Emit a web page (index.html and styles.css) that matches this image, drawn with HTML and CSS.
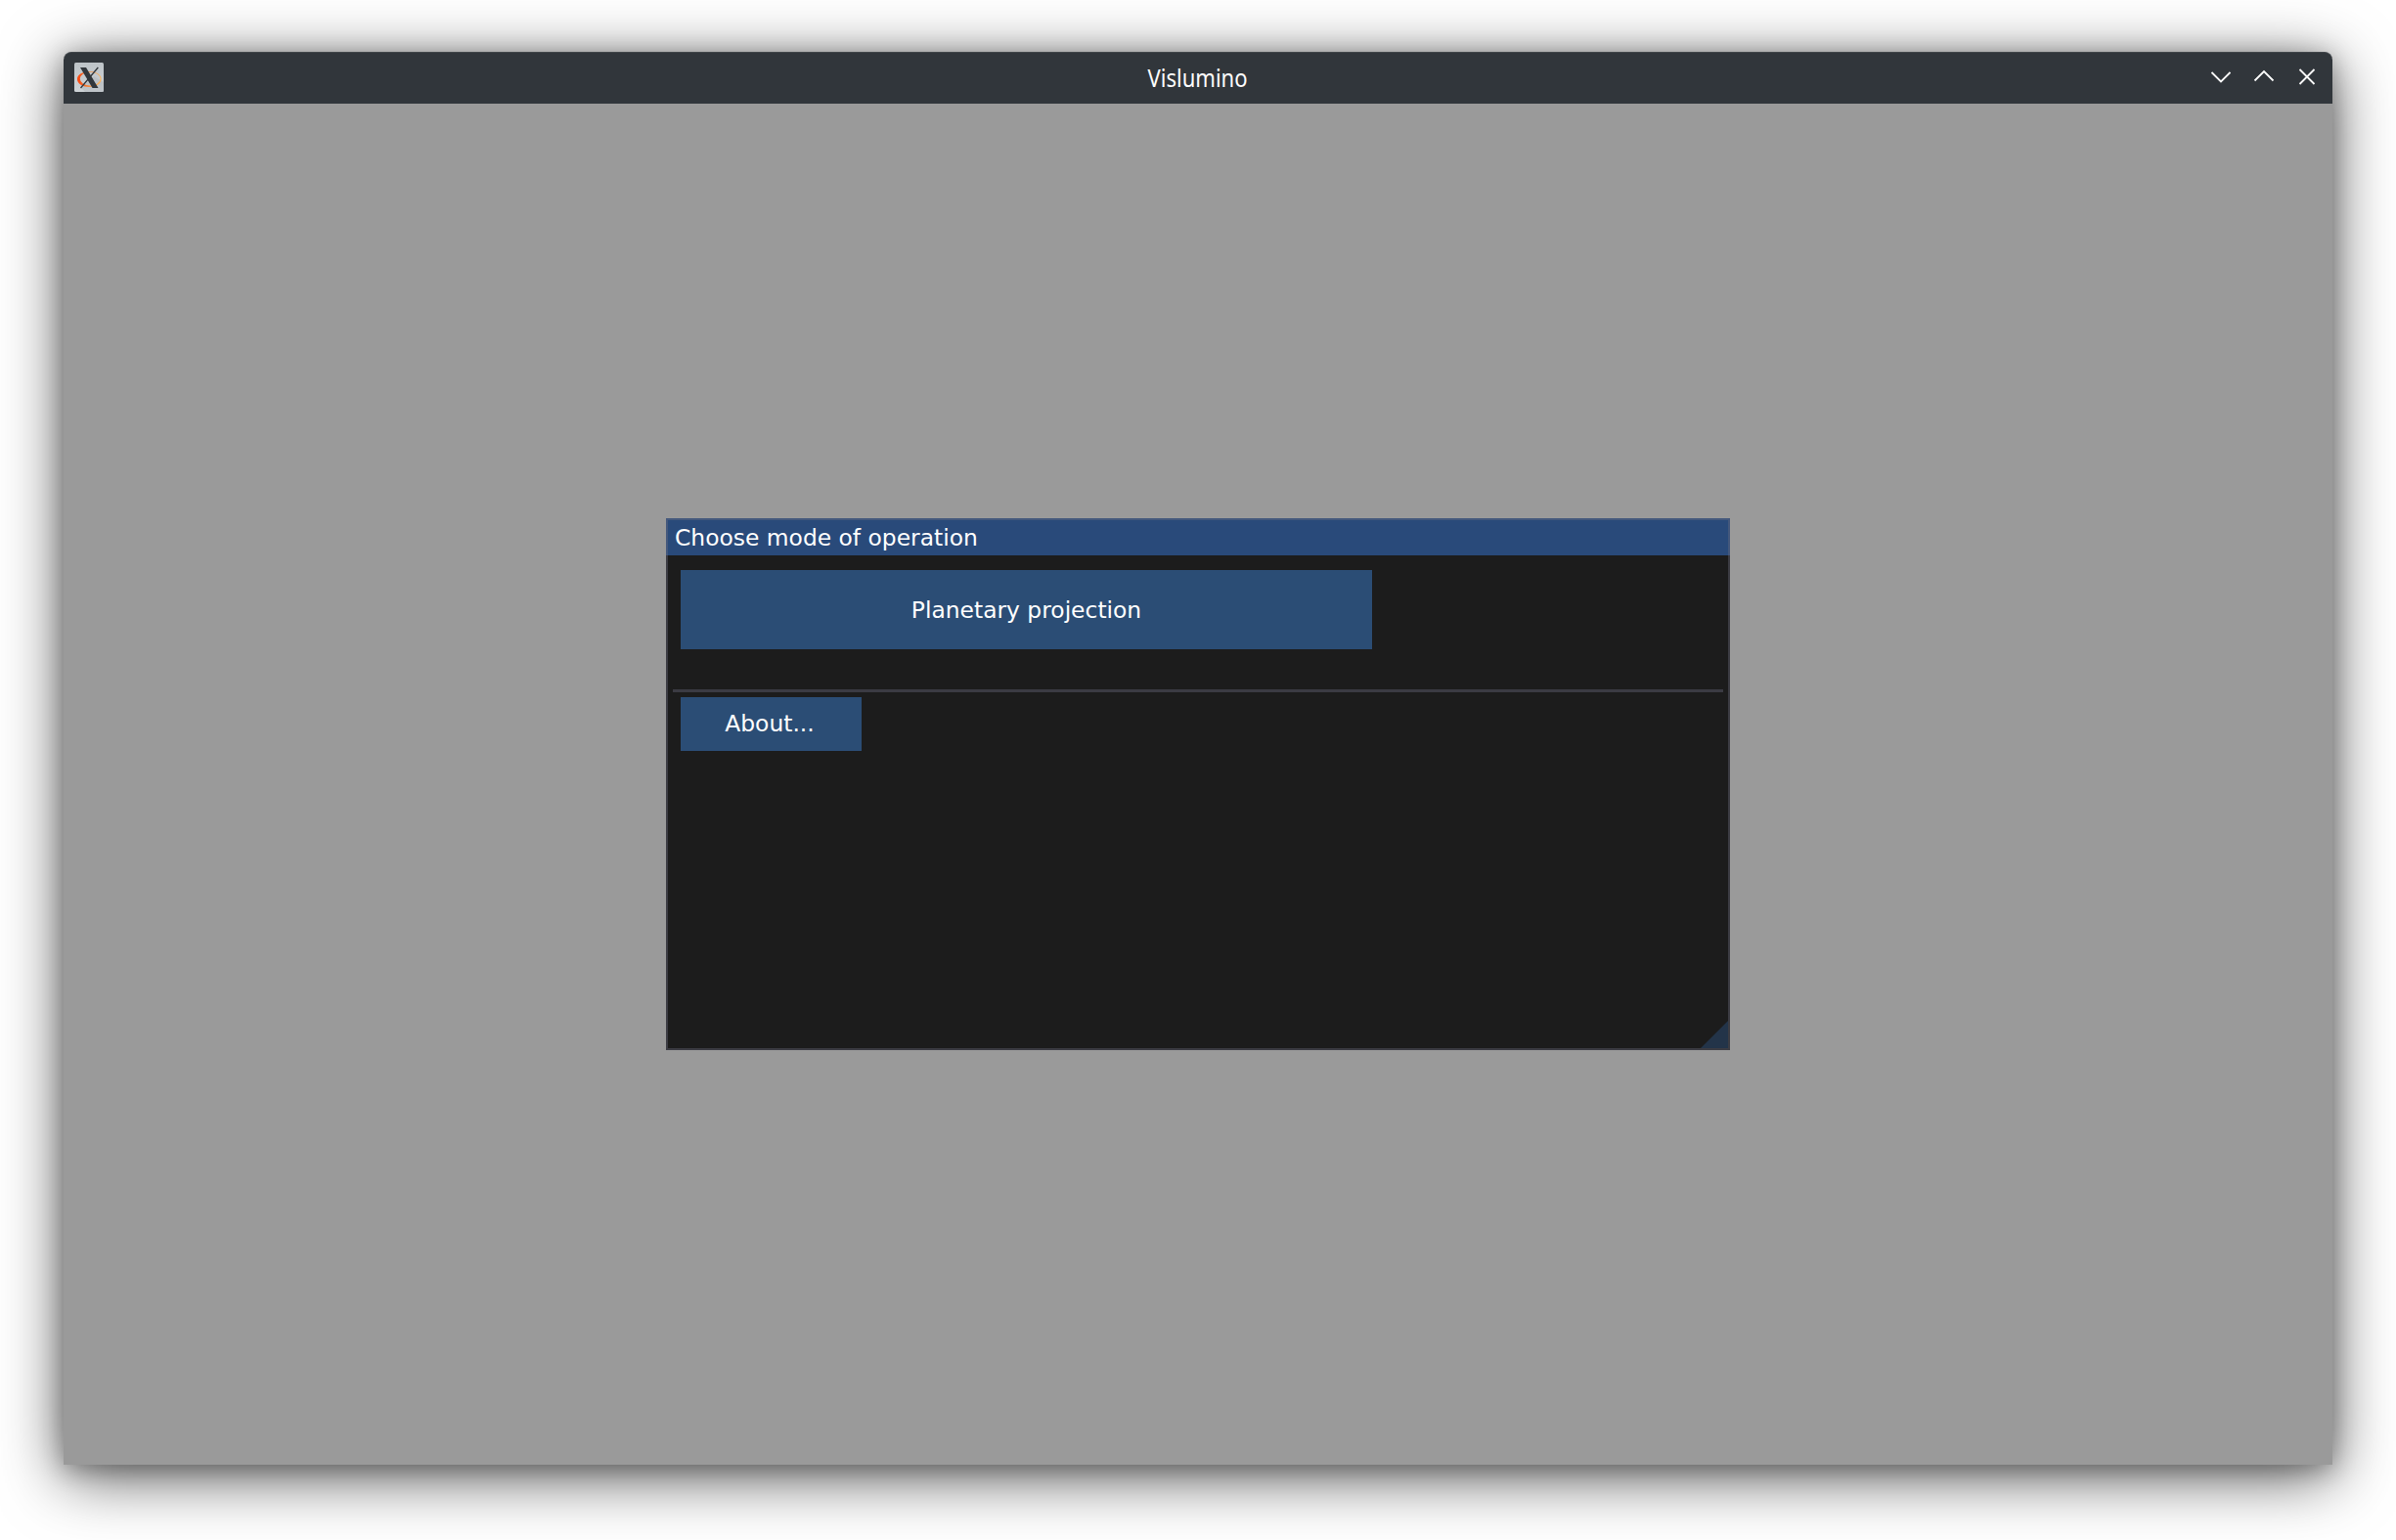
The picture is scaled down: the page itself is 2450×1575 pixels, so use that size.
FILE: index.html
```html
<!DOCTYPE html>
<html lang="en">
<head>
<meta charset="utf-8">
<title>Vislumino</title>
<link rel="stylesheet" href="styles.css">
</head>
<body>
<main class="window">
  <header class="titlebar">
    <svg class="app-icon" viewBox="0 0 30 30" aria-hidden="true">
      <defs>
        <linearGradient id="ring" x1="0" x2="1" y1="0" y2="0">
          <stop offset="0" stop-color="#f8430f"/><stop offset=".5" stop-color="#f58a3c"/><stop offset="1" stop-color="#fbb65c"/>
        </linearGradient>
        <linearGradient id="plate" x1="0" x2="0" y1="0" y2="1">
          <stop offset="0" stop-color="#bdc3c7"/><stop offset="1" stop-color="#ced3d6"/>
        </linearGradient>
      </defs>
      <rect width="30" height="30" rx="1.5" fill="url(#plate)"/>
      <path d="M7 26L11 30H30V20L20 14Z" fill="#a9afb3" opacity=".4"/>
      <path fill="url(#ring)" fill-rule="evenodd" d="M3 17A12.300 8 0 0 1 27.600 17A12.300 8 0 0 1 3 17ZM5.800 16.600A10.400 6.800 0 0 0 26.600 16.600A10.400 6.800 0 0 0 5.800 16.600Z"/>
      <path fill="#31363b" d="M6 5H12L24.500 26H18.500Z"/>
      <path d="M24.300 5L6.500 26" stroke="#31363b" stroke-width="1.300"/>
    </svg>
    <h1 class="window-title">Vislumino</h1>
    <div class="controls">
      <svg viewBox="0 0 24 24"><path d="M2.500 7L12 16.500L21.500 7"/></svg>
      <svg viewBox="0 0 24 24"><path d="M2.500 15.500L12 6L21.500 15.500"/></svg>
      <svg viewBox="0 0 24 24"><path d="M4.500 4L19.500 19M19.500 4L4.500 19"/></svg>
    </div>
  </header>
  <div class="canvas">
    <section class="dialog">
      <h2 class="dialog-title">Choose mode of operation</h2>
      <div class="dialog-body">
        <button class="button mode">Planetary projection</button>
        <hr class="separator">
        <button class="button about">About...</button>
      </div>
      <i class="grip"></i>
    </section>
  </div>
</main>
</body>
</html>
```
FILE: styles.css
```css
* { box-sizing: border-box; }
body {
  margin: 0;
  width: 2450px;
  height: 1575px;
  padding: 53px 65px 77px;
  background: #fff;
  overflow: hidden;
}
.window {
  display: flex;
  flex-direction: column;
  height: 1445px;
  border-radius: 8px 8px 0 0;
  box-shadow: 0 12px 64px rgba(0, 0, 0, .66), 0 4px 24px rgba(0, 0, 0, .28);
}
.titlebar {
  display: grid;
  grid-template-columns: 1fr auto 1fr;
  align-items: center;
  height: 53px;
  padding: 0 14px 2px 11px;
  background: #31363b;
  border-top: 1px solid #42474b;
  border-radius: 8px 8px 0 0;
}
.app-icon { width: 30px; height: 30px; }
.window-title {
  margin: 0;
  padding: 1px 0 0 3px;
  font: 400 24.5px/32px "Noto Sans", sans-serif;
  color: #fcfcfc;
  transform: scaleX(.9);
}
.controls { display: flex; justify-content: flex-end; gap: 20px; }
.controls svg { width: 24px; height: 24px; fill: none; stroke: #fcfcfc; stroke-width: 1.8; }
.canvas {
  flex: 1;
  display: flex;
  justify-content: center;
  align-items: center;
  background: #9a9a9a;
}
.dialog {
  position: relative;
  width: 1088px;
  height: 544px;
  background: #1c1c1c;
  font: 400 23.4px/27px "DejaVu Sans", sans-serif;
  color: #fff;
}
.dialog::after {
  content: "";
  position: absolute;
  inset: 0;
  border: 2px solid rgba(110, 110, 128, .4);
}
.dialog-title {
  margin: 0;
  height: 38px;
  padding: 7px 9px 4px;
  background: #294a7a;
  font: inherit;
}
.dialog-body { padding: 15px 7px 0; }
.button {
  display: block;
  margin: 0 8px;
  padding: 0;
  border: 0;
  background: #2b4d75;
  font: inherit;
  color: inherit;
}
.mode { width: 707px; height: 81px; padding-top: 2px; }
.about { width: 185px; height: 55px; padding-right: 3px; }
.separator { height: 3px; margin: 41px 0 5px; border: 0; background: #3b3b43; }
.grip {
  position: absolute;
  right: 2px;
  bottom: 2px;
  width: 28px;
  height: 28px;
  background: #233449;
  clip-path: polygon(100% 0, 100% 100%, 0 100%);
}
```
